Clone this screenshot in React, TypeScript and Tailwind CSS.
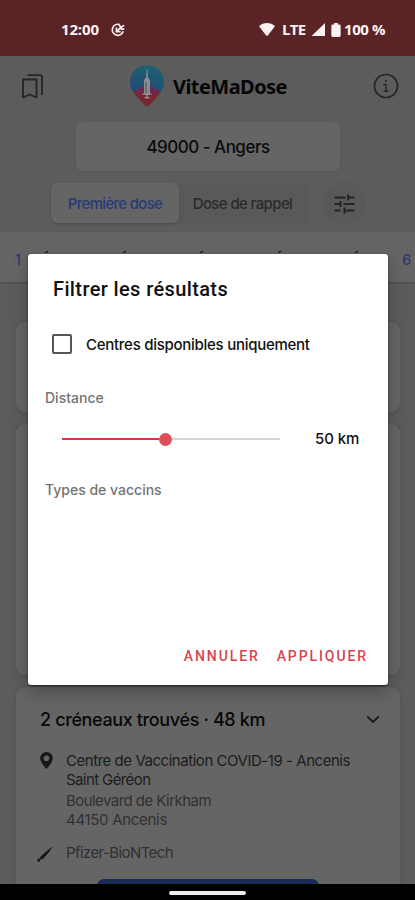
import { type ReactNode } from "react";
import clsx from "clsx";

/* ── Status bar ── */

function StatusBar() {
  return (
    <div className="flex h-[56px] shrink-0 items-center bg-[#5a2427] pt-[4px] pr-[29px] pl-[61px] font-['Open_Sans',sans-serif] text-[15px] font-bold text-[#fbf1f0]">
      <span className="-mt-[2px] w-[50px] tracking-[-0.15px]">12:00</span>
      {/* Rotation notification */}
      <svg
        width="14"
        height="14"
        viewBox="0 0 15 15"
        fill="none"
        stroke="currentColor"
        strokeWidth="1.8"
        strokeLinecap="round"
      >
        <path d="M8.500 1.500A5.900 5.900 0 1 0 12.800 9.500" />
        <path d="M5.800 5.500v3.800h3.800M6 9.100L10.500 4.600M9 2.500l1.700 2.300 2.800-2M11 6.500h2.500" />
      </svg>
      <div className="ml-auto flex items-center">
        <svg
          className="-mt-[1px] mr-[1px]"
          width="16"
          height="13"
          viewBox="0 0 16 13"
          fill="currentColor"
        >
          <path d="M0 3.2C4.4-1 11.6-1 16 3.2L8.8 12.4q-.8.9-1.6 0z" />
        </svg>
        <span className="-mt-[2px] ml-[6px] w-[29px] tracking-[-0.7px]">
          LTE
        </span>
        <svg
          className="-mt-[1px]"
          width="14"
          height="13"
          viewBox="0 0 14 13"
          fill="currentColor"
        >
          <path d="M14 0v13H.6z" />
        </svg>
        <svg
          className="-mt-[1px] ml-[6px]"
          width="10"
          height="14"
          viewBox="0 0 10 15"
          fill="currentColor"
        >
          <path d="M3 0h4v1.500h1.500Q10 1.500 10 3v10.500q0 1.500-1.500 1.500h-7Q0 15 0 13.500V3q0-1.500 1.500-1.500H3z" />
        </svg>
        <span className="-mt-[2px] ml-[3px] w-[42px] tracking-[-0.4px] whitespace-nowrap">
          100 %
        </span>
      </div>
    </div>
  );
}

/* ── Header ── */

function Logo() {
  return (
    <svg width="36" height="42" viewBox="0 0 36 42">
      <defs>
        <linearGradient id="pin-top" x1="0.6" y1="0" x2="0.3" y2="1">
          <stop offset="0" stopColor="#1b6270" />
          <stop offset="1" stopColor="#253f7c" />
        </linearGradient>
        <linearGradient id="pin-bottom" x1="0" y1="0" x2="0" y2="1">
          <stop offset="0" stopColor="#642a64" />
          <stop offset="0.6" stopColor="#7b262b" />
        </linearGradient>
        <clipPath id="pin">
          <path d="M18 .5C8 .5 1 7.800 1 17c0 8 5.500 12.500 14 22.500q3 3.300 6 0C29.500 29.500 35 25 35 17 35 7.800 28 .5 18 .5z" />
        </clipPath>
      </defs>
      <g clipPath="url(#pin)">
        <path fill="url(#pin-top)" d="M0 0h36v42H0z" />
        <path fill="url(#pin-bottom)" d="M0 29.500L15 20.500q3-1.500 6 0l15 9V42H0z" />
      </g>
      {/* Syringe */}
      <g fill="#8c8c92">
        <path d="M17.600 4h.8l.6 9.500h-2z" />
        <path d="M16.500 13h3l1.500 2.500V29h-6V15.500z" />
        <path d="M13.500 28.500h9V30h-9zM17.200 30h1.600v3h-1.600zM15.500 32h5v1.500h-5z" />
      </g>
      <path stroke="#49465d" strokeWidth="1" d="M17 17v11" />
    </svg>
  );
}

function Header() {
  return (
    <div className="flex h-[60px] shrink-0 items-center justify-between pr-[16px] pl-[21px]">
      {/* Bookmarks */}
      <svg
        width="24"
        height="27"
        viewBox="0 0 24 27"
        fill="none"
        stroke="#242424"
        strokeWidth="1.800"
      >
        <path d="M2 6.500h13.500v18L8.750 21.500 2 24.500z" strokeLinejoin="round" />
        <path d="M6.500 2.200H19q2 0 2 2V22" />
      </svg>
      <div className="-mt-[1px] flex items-center">
        <Logo />
        <span className="mt-[2px] ml-[8px] w-[116px] font-['Noto_Sans',sans-serif] text-[20px] leading-[24px] font-bold tracking-[-0.56px] text-[#060606]">
          ViteMaDose
        </span>
      </div>
      {/* Info */}
      <svg
        width="26"
        height="26"
        viewBox="0 0 26 26"
        fill="none"
        stroke="#242424"
        strokeWidth="1.700"
      >
        <circle cx="13" cy="13" r="11.500" />
        <path d="M10.500 11.500H13V18M10.500 18.200h5" strokeWidth="1.400" />
        <circle cx="13" cy="8" r="1" fill="#242424" stroke="none" />
      </svg>
    </div>
  );
}

/* ── Search ── */

function SearchControls() {
  return (
    <>
      <div className="mt-[6px] ml-[76px] flex h-[49px] w-[264px] shrink-0 items-center justify-center rounded-[6px] bg-[#656565] pt-[3px] font-['Inter',sans-serif] text-[17px] font-medium tracking-[-0.5px] text-[#0b0b0b] shadow-[0_0_3px_#00000014]">
        49000 - Angers
      </div>
      <div className="mt-[11px] flex h-[43px] shrink-0 items-center pl-[51px]">
        <div className="flex h-[42px] w-[257px] rounded-[7px] bg-[#595959] font-['Inter',sans-serif] text-[15px] font-medium">
          <span className="flex h-[40px] w-[128px] items-center justify-center rounded-[6px] bg-[#656565] pt-[3px] tracking-[-0.7px] text-[#273b75] shadow-[0_1px_2px_#00000022]">
            Première dose
          </span>
          <span className="flex h-[40px] w-[129px] items-center justify-center pt-[3px] pr-[2px] tracking-[-0.62px] text-[#2a2a2a]">
            Dose de rappel
          </span>
        </div>
        <div className="ml-[15px] flex size-[43px] items-center justify-center rounded-full bg-[#595959]">
          {/* Sliders with arrow-shaped handles */}
          <svg
            width="21"
            height="20"
            viewBox="0 0 21 20"
            fill="none"
            stroke="#252525"
            strokeWidth="2"
          >
            <path d="M.5 3.500h11M14 3.500h6.500M.5 10H6M9.500 10h11M.5 16.500h6M13 16.500h7.500" />
            <path d="M14 .5v6M6.500 7v6M10.500 13.500v6" />
            <path d="M14 2l3 1.500L14 5M6.500 8.500l-3 1.500 3 1.500M10.500 15l3 1.500-3 1.500" strokeWidth="1" />
          </svg>
        </div>
      </div>
    </>
  );
}

/* ── Day strip ── */

function DayStrip() {
  return (
    <div className="mt-[7px] flex h-[50px] shrink-0 items-center bg-[#656565] pt-[4px] pr-[4px] pl-[15px] font-['Inter',sans-serif] text-[14px] font-medium text-[#293a6f] shadow-[0_1px_2px_#00000030]">
      <span className="w-[29px]">1</span>
      {/* Accents of the labels hidden by the dialog */}
      <svg
        className="-mt-[16px]"
        width="320"
        height="4"
        viewBox="0 0 320 4"
        stroke="#202020"
        strokeWidth="1.500"
      >
        <path d="M1 4l3-2M79 4l3-2M156 4l3-2M234 4l3-2M311 4l3-2" />
      </svg>
      <span className="ml-auto">6</span>
    </div>
  );
}

/* ── Result cards ── */

function Card({
  className,
  children,
}: {
  className?: string;
  children?: ReactNode;
}) {
  return (
    <div
      className={clsx(
        "mr-[15px] ml-[16px] shrink-0 rounded-[9px] bg-[#656565] shadow-[0_1px_4px_#0000001a]",
        className
      )}
    >
      {children}
    </div>
  );
}

function CenterCard() {
  return (
    <Card className="mt-[12px] h-[220px] pt-[20px] font-['Inter',sans-serif]">
      <div className="flex h-[24px] items-center justify-between pr-[20px] pl-[24px]">
        <span className="text-[18px] font-medium tracking-[-0.37px] text-[#080808]">
          2 créneaux trouvés · 48 km
        </span>
        <svg
          width="14"
          height="9"
          viewBox="0 0 14 9"
          fill="none"
          stroke="#181818"
          strokeWidth="1.800"
        >
          <path d="M1.200 1.300L7 7l5.800-5.700" />
        </svg>
      </div>
      <div className="mt-[21px] flex pl-[24px] text-[15px] leading-[19px]">
        <svg width="13" height="17" viewBox="0 0 13 17" fill="#171717">
          <path
            fillRule="evenodd"
            d="M6.500 0A6.300 6.300 0 0 0 .2 6.300C.2 10.500 6.500 17 6.500 17s6.300-6.500 6.300-10.700A6.300 6.300 0 0 0 6.500 0zm0 3.500a2.800 2.800 0 1 1 0 5.600 2.800 2.800 0 0 1 0-5.600z"
          />
        </svg>
        <div className="-mt-[1px] ml-[13px]">
          <p className="tracking-[-0.46px] whitespace-nowrap text-[#1c1c1c]">
            Centre de Vaccination COVID-19 - Ancenis
          </p>
          <p className="tracking-[-0.6px] text-[#1c1c1c]">Saint Géréon</p>
          <p className="mt-[2px] tracking-[-0.55px] text-[#313131]">
            Boulevard de Kirkham
          </p>
          <p className="tracking-[-0.3px] text-[#313131]">44150 Ancenis</p>
        </div>
      </div>
      <div className="mt-[14px] flex h-[20px] items-center pl-[21px]">
        <svg className="mt-[2px]" width="16" height="16" viewBox="0 0 16 16">
          <path d="M15.800.2L11.500 3.500 3 11l2.500 2.500L12.500 5.500z" fill="#181818" />
          <path
            d="M.8 15.200l3.500-3.500M.3 13.500l2.200 2.200"
            stroke="#181818"
            strokeWidth="1.800"
          />
        </svg>
        <span className="ml-[13px] text-[15px] tracking-[-0.6px] text-[#303030]">
          Pfizer-BioNTech
        </span>
      </div>
      <div className="mt-[16px] ml-[81px] h-[40px] w-[222px] rounded-[7px] bg-[#192d57]" />
    </Card>
  );
}

/* ── Filter dialog ── */

function FilterDialog() {
  return (
    <div
      role="dialog"
      className="absolute top-[254px] left-[28px] flex h-[431px] w-[360px] flex-col rounded-[3px] bg-white font-['Inter',sans-serif] shadow-[0_1px_2px_#00000090,0_8px_18px_#00000040]"
    >
      <h2 className="mt-[22px] ml-[25px] font-['Roboto',sans-serif] text-[20px] leading-[26px] font-medium tracking-[0.38px] text-[#111]">
        Filtrer les résultats
      </h2>
      <div className="mt-[31px] ml-[24px] flex h-[22px] items-center">
        <span className="size-[20px] rounded-[2px] border-2 border-[#555]" />
        <span className="mt-[3px] ml-[14px] text-[15px] font-medium tracking-[-0.27px] text-[#111]">
          Centres disponibles uniquement
        </span>
      </div>
      <p className="mt-[33px] ml-[17px] text-[14px] leading-[20px] font-medium text-[#737373]">
        Distance
      </p>
      <div className="mt-[20px] flex h-[22px] items-center pl-[34px]">
        <div className="flex w-[218px] items-center">
          <span className="h-[2px] w-[97px] bg-[#d5364a]" />
          <span className="size-[13px] rounded-full bg-[#dc5059]" />
          <span className="h-[2px] flex-1 bg-[#d5d5d5]" />
        </div>
        <span className="ml-[35px] text-[15px] font-medium tracking-[-0.1px] text-[#111]">
          50 km
        </span>
      </div>
      <p className="mt-[30px] ml-[17px] text-[14px] leading-[20px] font-medium text-[#737373]">
        Types de vaccins
      </p>
      <div className="mt-auto mb-[18px] flex justify-end gap-[17px] pr-[20px] font-['Roboto',sans-serif] text-[14px] leading-[21px] font-medium tracking-[1.900px] text-[#d84450]">
        <button type="button">ANNULER</button>
        <button type="button">APPLIQUER</button>
      </div>
    </div>
  );
}

export default function App() {
  return (
    <div className="relative flex h-[900px] w-[415px] flex-col overflow-hidden bg-[#5c5c5c]">
      <div className="flex min-h-0 flex-1 flex-col overflow-hidden">
        <StatusBar />
        <Header />
        <SearchControls />
        <DayStrip />
        <Card className="mt-[40px] h-[90px]" />
        <Card className="mt-[12px] h-[251px]" />
        <CenterCard />
      </div>
      {/* Gesture bar */}
      <div className="flex h-[16px] shrink-0 justify-center bg-black pt-[7px]">
        <span className="h-[4px] w-[77px] rounded-full bg-[#eee]" />
      </div>
      <FilterDialog />
    </div>
  );
}
